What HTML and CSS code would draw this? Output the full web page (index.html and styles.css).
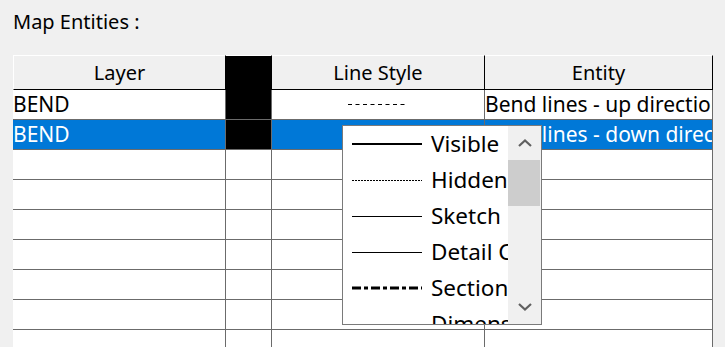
FILE: index.html
```html
<!DOCTYPE html>
<html>
<head>
<meta charset="utf-8">
<link rel="stylesheet" href="styles.css">
</head>
<body>
<div class="label">Map Entities :</div>
<div class="grid">
  <div class="hcell first">Layer</div>
  <div class="hcell swatch"></div>
  <div class="hcell">Line Style</div>
  <div class="hcell">Entity</div>

  <div class="cell">BEND</div>
  <div class="cell swatch"></div>
  <div class="cell center"><svg class="dash" width="60" height="1" viewBox="0 0 60 1"><line x1="0" y1="0.5" x2="60" y2="0.5" stroke="#000" stroke-width="1" stroke-dasharray="4 3.5"/></svg></div>
  <div class="cell">Bend lines - up direction</div>

  <div class="cell sel">BEND</div>
  <div class="cell swatch"></div>
  <div class="cell sel"></div>
  <div class="cell sel">Bend lines - down direction</div>

  <div class="cell"></div><div class="cell"></div><div class="cell"></div><div class="cell"></div>
  <div class="cell"></div><div class="cell"></div><div class="cell"></div><div class="cell"></div>
  <div class="cell"></div><div class="cell"></div><div class="cell"></div><div class="cell"></div>
  <div class="cell"></div><div class="cell"></div><div class="cell"></div><div class="cell"></div>
  <div class="cell"></div><div class="cell"></div><div class="cell"></div><div class="cell"></div>
  <div class="cell"></div><div class="cell"></div><div class="cell"></div><div class="cell"></div>
  <div class="cell"></div><div class="cell"></div><div class="cell"></div><div class="cell"></div>
</div>

<div class="dropdown">
  <ul class="list">
    <li class="item"><svg width="70" height="4" viewBox="0 0 70 4"><line x1="0" y1="2" x2="70" y2="2" stroke="#000" stroke-width="2"/></svg><span>Visible</span></li>
    <li class="item"><svg width="70" height="4" viewBox="0 0 70 4"><line x1="0" y1="2.5" x2="70" y2="2.5" stroke="#000" stroke-width="1" stroke-dasharray="2 1"/></svg><span>Hidden</span></li>
    <li class="item"><svg width="70" height="4" viewBox="0 0 70 4"><line x1="0" y1="2.5" x2="70" y2="2.5" stroke="#000" stroke-width="1"/></svg><span>Sketch</span></li>
    <li class="item"><svg width="70" height="4" viewBox="0 0 70 4"><line x1="0" y1="2.5" x2="70" y2="2.5" stroke="#000" stroke-width="1"/></svg><span>Detail Circle</span></li>
    <li class="item"><svg width="70" height="4" viewBox="0 0 70 4"><line x1="0" y1="2" x2="70" y2="2" stroke="#000" stroke-width="3" stroke-dasharray="9 3 4 3"/></svg><span>Section</span></li>
    <li class="item"><svg width="70" height="4" viewBox="0 0 70 4"><line x1="0" y1="2.5" x2="70" y2="2.5" stroke="#000" stroke-width="1"/></svg><span>Dimension</span></li>
  </ul>
  <div class="scrollbar">
    <div class="sbtn"><svg width="14" height="8" viewBox="0 0 14 8"><polyline points="1,7 7,1.5 13,7" fill="none" stroke="#606060" stroke-width="2.2"/></svg></div>
    <div class="thumb"></div>
    <div class="track"></div>
    <div class="sbtn"><svg width="14" height="8" viewBox="0 0 14 8"><polyline points="1,1 7,6.5 13,1" fill="none" stroke="#606060" stroke-width="2.2"/></svg></div>
  </div>
</div>
</body>
</html>
```

FILE: styles.css
```css
html, body {
  margin: 0;
  padding: 0;
  overflow: hidden;
  height: 347px;
}
body {
  background: #f0f0f0;
  font-family: "Noto Sans", "Open Sans", sans-serif;
  color: #000;
  position: relative;
}
.label {
  font-size: 20px;
  line-height: 30px;
  padding: 7px 13px 0;
  height: 55px;
  box-sizing: border-box;
}
.grid {
  display: grid;
  grid-template-columns: 213px 46px 213px 228px;
  margin-left: 13px;
  font-size: 21px;
}
.hcell {
  box-sizing: border-box;
  height: 35px;
  line-height: 33px;
  font-size: 20px;
  background: #f0f0f0;
  border-top: 1px solid #fff;
  border-bottom: 1px solid #000;
  border-right: 1px solid #000;
  text-align: center;
  white-space: nowrap;
  overflow: hidden;
}
.hcell.first {
  border-left: 1px solid #fff;
}
.hcell.swatch {
  background: #000;
}
.cell {
  box-sizing: border-box;
  height: 30px;
  line-height: 28px;
  background: #fff;
  border-right: 1px solid #6b6b6b;
  border-bottom: 1px solid #6b6b6b;
  white-space: nowrap;
  overflow: hidden;
}
.cell.center {
  display: flex;
  align-items: center;
  justify-content: center;
}
.cell.swatch {
  background: #000;
}
.cell.sel {
  background: #0078d7;
  color: #fff;
}
.dropdown {
  position: absolute;
  left: 342px;
  top: 125px;
  width: 200px;
  height: 200px;
  box-sizing: border-box;
  border: 1px solid #7a7a7a;
  background: #fff;
  display: flex;
  overflow: hidden;
}
.list {
  list-style: none;
  margin: 0;
  padding: 0;
  width: 165px;
  overflow: hidden;
  font-size: 22.5px;
}
.item {
  height: 36px;
  line-height: 36px;
  display: flex;
  align-items: center;
  padding-left: 9px;
  gap: 9px;
  white-space: nowrap;
}
.item svg {
  flex: none;
}
.scrollbar {
  width: 33px;
  background: #f0f0f0;
  display: flex;
  flex-direction: column;
}
.sbtn {
  height: 34px;
  flex: none;
  display: flex;
  align-items: center;
  justify-content: center;
}
.thumb {
  height: 46px;
  flex: none;
  background: #cdcdcd;
  margin: 0 1px 0 0;
}
.track {
  flex: 1;
}
```
